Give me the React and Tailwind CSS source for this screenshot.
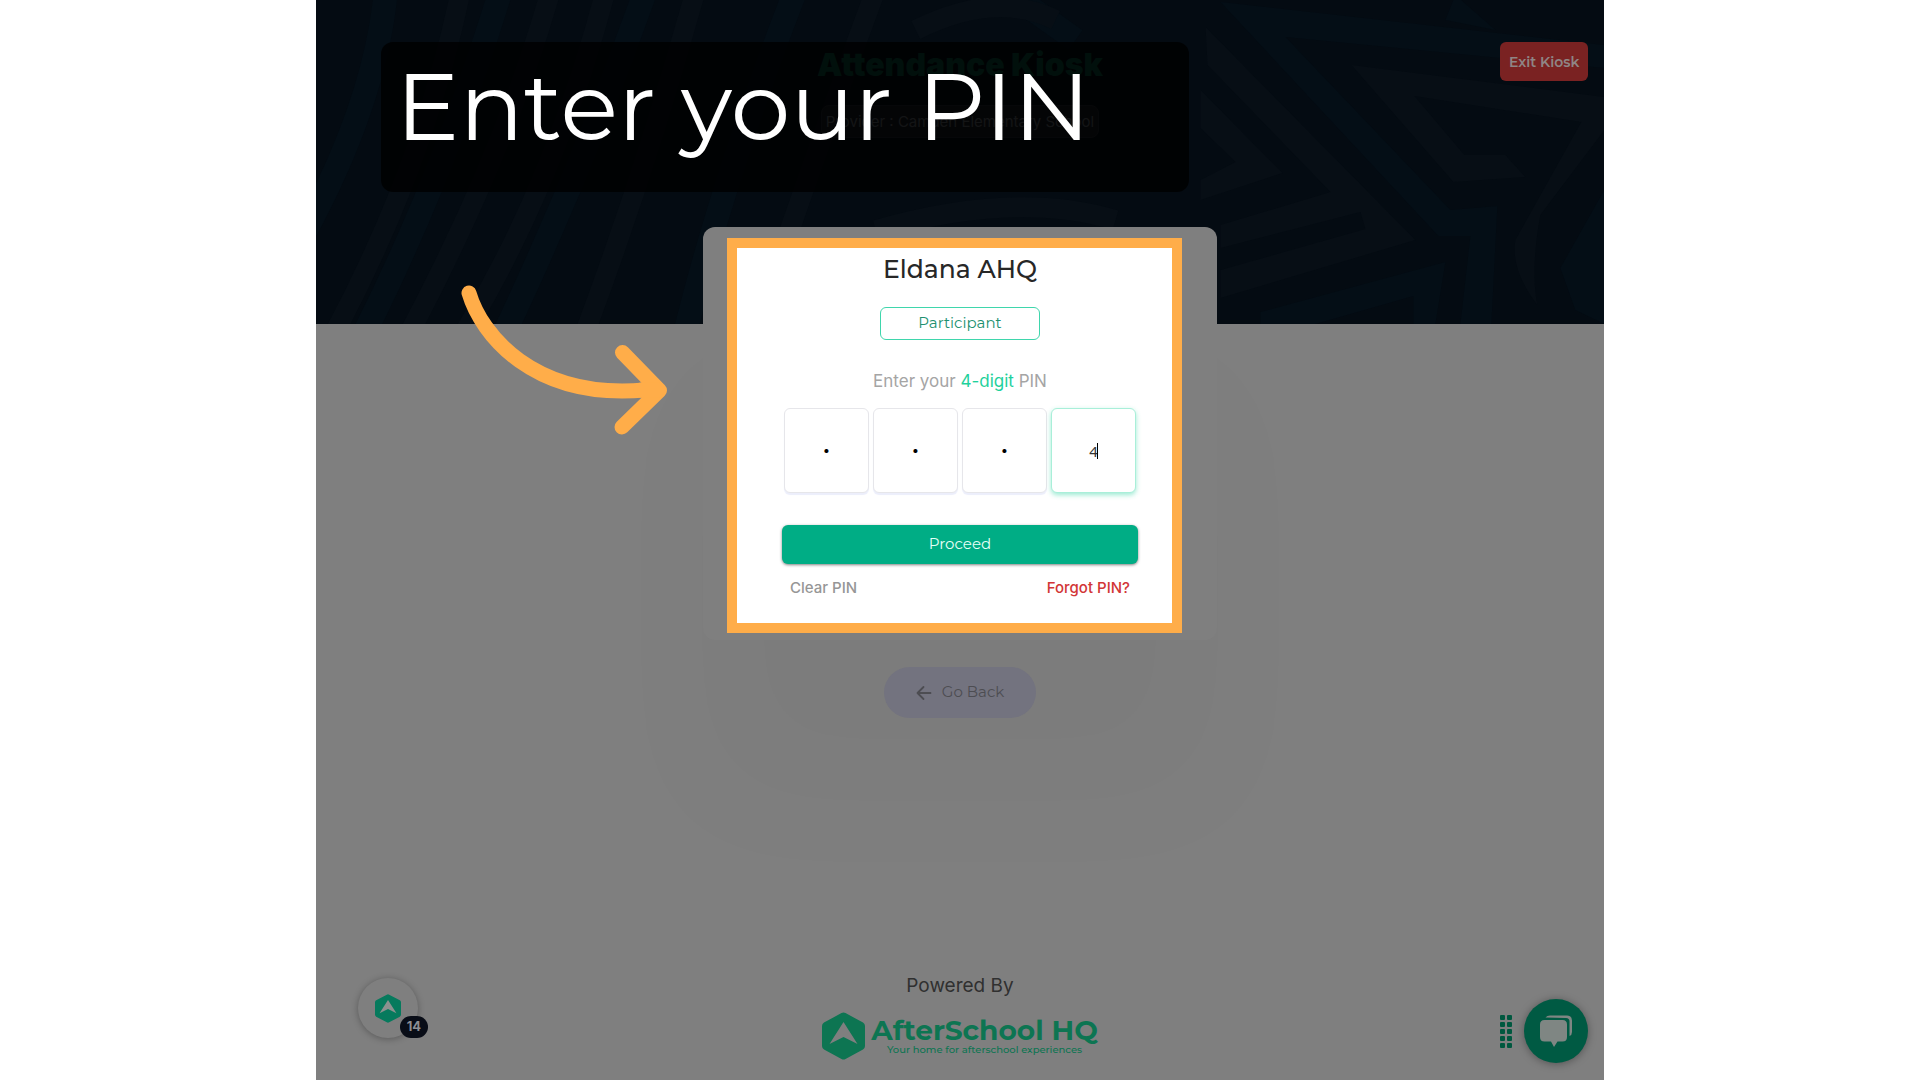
import React, { useState } from "react";

const display = "font-['Montserrat','Inter',sans-serif]";
const body = "font-['Inter',sans-serif]";

function HexLogo({ className, fill, arrow }) {
  return (
    <svg viewBox="0 0 43 47" className={className} aria-hidden="true">
      <path
        d="M19.5 .6q2-1.1 4 0L41 10q2 1.1 2 3.400V33.600q0 2.300-2 3.400L23.500 46.400q-2 1.100-4 0L2 37Q0 35.900 0 33.600V13.400Q0 11.100 2 10Z"
        fill={fill}
      />
      <path d="M21.500 9.500 35.500 31.500 21.500 24.500 7.500 31.500Z" fill={arrow} />
    </svg>
  );
}

function HeaderPattern() {
  return (
    <svg
      viewBox="0 0 1289 324"
      preserveAspectRatio="none"
      className="absolute inset-0 h-full w-full"
      aria-hidden="true"
    >
      <g fill="none" stroke="#040e16" strokeWidth="24">
        <path d="M-10 230Q60 100 70-10M50 330Q130 170 185-10M190 330Q270 160 330-10M370 330Q410 170 480-10M690-10 760 40M620 300Q700 240 770 290" />
      </g>
      <g fill="none" stroke="#070e15" strokeWidth="20">
        <path d="M20 330Q110 160 145-10M95 330Q190 150 235-10M150 330Q240 180 290-10M270 330Q330 170 380-10M440 330Q490 180 560-10M600 30Q680-10 740 20M560 230Q700 190 800 220" />
      </g>
      <g fill="#070e15">
        <path d="M890 27 1100 240 905 298V270L1050 229 1045 212 905 248V225L1015 192 892 65Z" />
        <path d="M885 90 967 173 885 200V180L920 162 885 128Z" />
        <path d="M1036 65 1289 97V130L1225 215Q1215 270 1222 305 1195 270 1200 240L1266 122 1099 96 1149 155H1190L1210 177 1138 182Z" />
      </g>
      <g fill="#040e16">
        <path d="M905 2 1289 45V68L970 37 1135 210 1182 206 1176 324H1145L1155 236H1123Z" />
        <path d="M945 324V312L1130 262 1120 324H1098V296L1000 324ZM1245 268 1289 190V324L1260 310ZM1140-5 1180 30 1130 20Z" />
      </g>
    </svg>
  );
}

function Arrow() {
  return (
    <svg
      viewBox="0 0 208 152"
      className="pointer-events-none absolute left-[145px] top-[284px] h-[152px] w-[208px]"
      fill="none"
      stroke="#ffad49"
      strokeWidth="15"
      strokeLinecap="round"
      strokeLinejoin="round"
      aria-hidden="true"
    >
      <path d="M8 9C20 50 72 116 184 106" />
      <path d="M161.500 68.500 198.500 106.500 161 143" />
      <path d="M180 106H196" />
    </svg>
  );
}

function PinForm() {
  const [pin, setPin] = useState(["1", "2", "3", "4"]);
  return (
    <section className="relative z-10 mx-auto h-[413px] w-[514px] rounded-xl bg-[#7f7f7f] shadow-[0_160px_130px_rgba(0,0,0,0.025)]">
      <div className="absolute bottom-[7px] left-6 right-[35px] top-[11px] border-10 border-[#ffad49] bg-white" />
      <form
        className="relative mx-auto flex w-[356px] flex-col items-center pt-6"
        onSubmit={(e) => e.preventDefault()}
      >
        <h2 className={`${display} text-[25px] leading-9 font-medium text-[#272727]`}>Eldana AHQ</h2>
        <button
          type="button"
          className={`${display} mt-5 h-[33px] w-40 rounded-md border border-[#3fd6ac] text-[15px] text-[#21906f]`}
        >
          Participant
        </button>
        <p className={`${body} mt-[29px] text-[17px] leading-6 text-[#a5a5a5]`}>
          Enter your <span className="text-[#1fd19c]">4-digit</span> PIN
        </p>
        <div className="mt-[15px] flex gap-1">
          {pin.map((digit, i) => {
            const active = i === 3;
            return (
              <div key={i} className="relative">
                <input
                  aria-label={`PIN digit ${i + 1}`}
                  maxLength={1}
                  value={active ? digit : "•"}
                  onChange={(e) => setPin(pin.map((d, n) => (n === i ? e.target.value : d)))}
                  className={
                    active
                      ? "block h-[85px] w-[85px] rounded-md border border-[#a9efd9] bg-white text-center font-['Noto_Sans',sans-serif] text-[15px] text-[#333] shadow-[0_2px_5px_rgba(31,209,156,0.45)] outline-none"
                      : "block h-[85px] w-[85px] rounded-md border border-[#e6e6ea] bg-white pb-0.5 text-center font-['Inter',sans-serif] text-[13px] text-black shadow-[0_2px_1px_#eceefb] outline-none"
                  }
                />
                {active && <span className="absolute left-[46px] top-[35px] h-4 w-px bg-black" />}
              </div>
            );
          })}
        </div>
        <button
          type="submit"
          className={`${display} mt-8 h-[39px] w-full rounded-md bg-[#00ad85] text-[15px] text-[#e6fff7] shadow-[0_1px_3px_rgba(0,0,0,0.5)]`}
        >
          Proceed
        </button>
        <div className={`${body} mt-3 flex w-full justify-between px-2 text-[15px] leading-6 font-medium`}>
          <button type="button" className="text-[#969696]">Clear PIN</button>
          <button type="button" className="text-[#d23636]">Forgot PIN?</button>
        </div>
      </form>
    </section>
  );
}

export default function App() {
  return (
    <div className="min-h-screen bg-white">
      <main className="relative mx-auto flex min-h-screen w-[67.1%] flex-col overflow-hidden bg-[#7f7f7f]">
        <header className="relative h-[324px] shrink-0 overflow-hidden bg-[#040b12]">
          <HeaderPattern />
          <div className="relative flex flex-col items-center pt-[47px]">
            <h1 className="font-['Inter',sans-serif] text-[32px] leading-9 font-black text-[#07503c]">
              Attendance Kiosk
            </h1>
            <p className={`${body} mt-[22px] h-[33px] rounded-lg border border-[#22272d] bg-[#171b21] px-1 text-[15px] leading-[31px] text-[#62666b]`}>
              Provider : Camden Elementary School
            </p>
          </div>
          <button
            type="button"
            className={`${display} absolute right-4 top-[42px] h-[39px] w-[88px] rounded-md bg-[#7a2222] text-sm font-semibold text-[#8f8585]`}
          >
            Exit Kiosk
          </button>
        </header>

        <div className="-mt-[97px]">
          <PinForm />
        </div>
        <button
          type="button"
          className={`${display} relative z-10 mx-auto mt-[27px] flex h-[51px] w-[152px] items-center justify-center gap-2.5 rounded-full bg-[#73737f] text-[15px] text-[#4d4d52]`}
        >
          <svg viewBox="0 0 16 16" className="h-4 w-4" fill="none" stroke="currentColor" strokeWidth="1.8" strokeLinecap="round" strokeLinejoin="round" aria-hidden="true">
            <path d="M14.500 8H1.500M7.500 2 1.500 8l6 6" />
          </svg>
          Go Back
        </button>

        <footer className="mt-auto flex flex-col items-center pb-5">
          <p className={`${body} text-[19px] leading-7 text-[#303030]`}>Powered By</p>
          <a href="#home" className="mt-3 flex items-center gap-1.5">
            <HexLogo className="h-12 w-[43px]" fill="#0d7552" arrow="#7f7f7f" />
            <span className={`${display} flex flex-col items-center text-[#0d7552]`}>
              <span className="text-[28px] leading-7 font-bold">AfterSchool HQ</span>
              <span className="text-[10px] leading-3 font-medium">Your home for afterschool experiences</span>
            </span>
          </a>
        </footer>

        <button
          type="button"
          aria-label="Open resources, 14 new"
          className="absolute bottom-[42px] left-[42px] flex h-[60px] w-[60px] items-center justify-center rounded-full bg-[#7f7f7f] shadow-[0_1px_7px_rgba(0,0,0,0.3)]"
        >
          <HexLogo className="h-[29px] w-[26px]" fill="#067a5d" arrow="#8b918f" />
          <span className={`${body} absolute -right-2.5 bottom-0 flex h-[22px] w-7 items-center justify-center rounded-full bg-[#090d17] text-[13px] font-bold text-[#8c8e92]`}>
            14
          </span>
        </button>

        <div className="absolute bottom-[17px] right-4 flex items-center gap-3">
          <div className="grid grid-cols-2 gap-0.5">
            {Array.from({ length: 10 }, (_, i) => (
              <span key={i} className="h-[5px] w-[5px] rounded-[1px] bg-[#00583f]" />
            ))}
          </div>
          <button
            type="button"
            aria-label="Open chat"
            className="flex h-16 w-16 items-center justify-center rounded-full bg-[#005a43] shadow-[0_1px_8px_rgba(0,0,0,0.35)]"
          >
            <svg viewBox="0 0 34 32" className="h-8 w-[34px]" aria-hidden="true">
              <path d="M6.500 2.500Q8 .5 11 .5H28Q33 .5 33 5.500V17Q33 20 30.500 21V6.500Q30.500 3 27 3Z" fill="#7f8683" />
              <path d="M5.500 5H23.500Q28 5 28 9.500V22Q28 26.500 23.500 26.500H18.500L15 32 12 26.500H5.500Q1 26.500 1 22V9.500Q1 5 5.500 5Z" fill="#7f8683" />
            </svg>
          </button>
        </div>

        <div className="absolute left-[65px] top-[42px] z-20 h-[150px] w-[808px] rounded-xl bg-black/80 pl-[15px]">
          <p className={`${display} text-[95px] leading-[128px] font-normal whitespace-nowrap text-white`}>
            Enter your PIN
          </p>
        </div>
        <Arrow />
      </main>
    </div>
  );
}
